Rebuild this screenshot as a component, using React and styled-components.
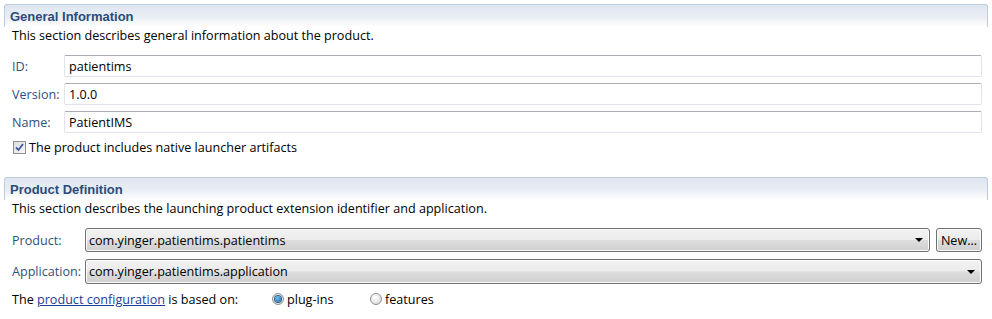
import React from "react";
import styled, { createGlobalStyle } from "styled-components";

const Global = createGlobalStyle`
  html, body { margin: 0; padding: 0; background: #ffffff; }
  body { font-family: "Open Sans", "Liberation Sans", Arial, sans-serif; font-size: 12.6px; color: #000; }
`;

const Page = styled.div`
  width: 992px;
  height: 319px;
  padding: 4px 4px 0 4px;
  box-sizing: border-box;
  overflow: hidden;
`;

const Section = styled.section`
  margin-top: ${(p) => p.$top || 0}px;
`;

const SectionHeader = styled.div`
  height: 22px;
  border: 1px solid #bccde0;
  border-bottom: none;
  border-radius: 3px 3px 0 0;
  background: linear-gradient(#dfe6f0 0%, #e9eef5 55%, #ffffff 100%);
  display: flex;
  align-items: center;
  padding-left: 5px;
  font-family: "Liberation Sans", Arial, sans-serif;
  font-weight: bold;
  font-size: 13px;
  color: #2a4c7a;
`;

const Body = styled.div`
  padding: 0 6px 0 8px;
`;

const Description = styled.div`
  height: 14px;
  line-height: 14px;
  margin-top: 2px;
`;

const FieldGrid = styled.div`
  display: grid;
  grid-template-columns: ${(p) => p.$label}px 1fr;
  row-gap: ${(p) => p.$gap}px;
  margin-top: ${(p) => p.$top}px;
  align-items: center;
`;

const Label = styled.div`
  color: #30507c;
`;

const TextInput = styled.div`
  height: 22px;
  box-sizing: border-box;
  border: 1px solid #e2e3ea;
  border-top-color: #abadb3;
  border-radius: 2px;
  padding-left: 4px;
  display: flex;
  align-items: center;
  background: #fff;
`;

const ComboRow = styled.div`
  display: flex;
  gap: 6px;
`;

const winButton = `
  box-sizing: border-box;
  border: 1px solid #707070;
  border-radius: 3px;
  background: linear-gradient(#f2f2f2 0%, #ebebeb 48%, #dddddd 52%, #cfcfcf 100%);
  box-shadow: inset 0 0 0 1px #fcfcfc;
`;

const Combo = styled.div`
  ${winButton}
  flex: 1;
  height: ${(p) => p.$h}px;
  display: flex;
  align-items: center;
  padding: 0 6px 0 3px;
`;

const ComboText = styled.span`
  flex: 1;
`;

const Arrow = styled.span`
  width: 0;
  height: 0;
  border-left: 4px solid transparent;
  border-right: 4px solid transparent;
  border-top: 4px solid #000;
`;

const Button = styled.div`
  ${winButton}
  width: 46px;
  height: 24px;
  display: flex;
  align-items: center;
  justify-content: center;
`;

const CheckRow = styled.div`
  display: flex;
  align-items: center;
  gap: 3px;
  margin-top: 7px;
  padding-left: 1px;
  height: 14px;
`;

const CheckBox = styled.span`
  width: 13px;
  height: 13px;
  box-sizing: border-box;
  border: 1px solid #8e8f8f;
  background: linear-gradient(135deg, #dcdcdc, #f8f8f8);
  display: flex;
  align-items: center;
  justify-content: center;
`;

const ConfigRow = styled.div`
  display: flex;
  align-items: center;
  height: 14px;
  margin-top: 8px;
`;

const Link = styled.span`
  color: #1b3c95;
  text-decoration: underline;
`;

const BasedOn = styled.span`
  width: 260px;
`;

const RadioItem = styled.span`
  display: inline-flex;
  align-items: center;
  gap: 3px;
  width: ${(p) => p.$w}px;
`;

const Radio = styled.span`
  width: 12px;
  height: 12px;
  box-sizing: border-box;
  border-radius: 50%;
  border: 1px solid #8e8f8f;
  background: radial-gradient(circle at 40% 35%, #ffffff, #d4d4d4);
  display: inline-flex;
  align-items: center;
  justify-content: center;
`;

const RadioDot = styled.span`
  width: 6px;
  height: 6px;
  border-radius: 50%;
  background: radial-gradient(circle at 40% 35%, #6fc1f5, #1b5e9e);
  box-shadow: 0 0 0 1px #2c5d8a;
`;

export default function App() {
  return (
    <>
      <Global />
      <Page>
        <Section>
          <SectionHeader>General Information</SectionHeader>
          <Body>
            <Description>This section describes general information about the product.</Description>
            <FieldGrid $label={52} $gap={6} $top={12}>
              <Label>ID:</Label>
              <TextInput>patientims</TextInput>
              <Label>Version:</Label>
              <TextInput>1.0.0</TextInput>
              <Label>Name:</Label>
              <TextInput>PatientIMS</TextInput>
            </FieldGrid>
            <CheckRow>
              <CheckBox>
                <svg width="9" height="9" viewBox="0 0 9 9">
                  <path d="M1 4.5 L3.5 7 L8 1" fill="none" stroke="#3b5aa0" strokeWidth="1.8" />
                </svg>
              </CheckBox>
              <span>The product includes native launcher artifacts</span>
            </CheckRow>
          </Body>
        </Section>
        <Section $top={23}>
          <SectionHeader>Product Definition</SectionHeader>
          <Body>
            <Description>This section describes the launching product extension identifier and application.</Description>
            <FieldGrid $label={73} $gap={7} $top={12}>
              <Label>Product:</Label>
              <ComboRow>
                <Combo $h={24}>
                  <ComboText>com.yinger.patientims.patientims</ComboText>
                  <Arrow />
                </Combo>
                <Button>New...</Button>
              </ComboRow>
              <Label>Application:</Label>
              <ComboRow>
                <Combo $h={25}>
                  <ComboText>com.yinger.patientims.application</ComboText>
                  <Arrow />
                </Combo>
              </ComboRow>
            </FieldGrid>
            <ConfigRow>
              <BasedOn>
                The <Link>product configuration</Link> is based on:
              </BasedOn>
              <RadioItem $w={98}>
                <Radio><RadioDot /></Radio>
                plug-ins
              </RadioItem>
              <RadioItem $w={100}>
                <Radio />
                features
              </RadioItem>
            </ConfigRow>
          </Body>
        </Section>
      </Page>
    </>
  );
}
